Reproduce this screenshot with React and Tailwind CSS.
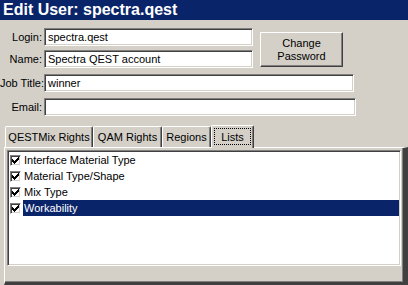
import React from "react";

const sunken =
  "border border-t-[#808080] border-l-[#808080] border-r-white border-b-white shadow-[inset_1px_1px_0_#404040,inset_-1px_-1px_0_#d4d0c8]";

function Field({ label, width, value }) {
  return (
    <div className="flex items-center h-[18px]">
      <div className="w-[42px] text-right whitespace-nowrap">{label}</div>
      <div className={`ml-[2px] h-[18px] bg-white flex items-center pl-[3px] ${sunken}`} style={{ width }}>
        <span className="leading-[14px]">{value}</span>
      </div>
    </div>
  );
}

function Check() {
  const cols = [2, 3, 4, 3, 2, 1, 0];
  return (
    <div className="w-[11px] h-[11px] bg-white border border-t-[#808080] border-l-[#808080] border-r-white border-b-white shadow-[inset_1px_1px_0_#404040,inset_-1px_-1px_0_#d4d0c8] relative shrink-0">
      <svg width="7" height="7" viewBox="0 0 7 7" className="absolute left-[1px] top-[1px]" shapeRendering="crispEdges">
        {cols.map((y, x) => (
          <rect key={x} x={x} y={y} width="1" height="3" fill="#000" />
        ))}
      </svg>
    </div>
  );
}

function Tab({ label, width, selected }) {
  if (selected) {
    return (
      <div
        className="relative z-10 h-[23px] -mb-[1px] bg-[#d4d0c8] border-l border-t border-l-white border-t-white border-r border-r-[#404040] shadow-[inset_-1px_0_0_#808080] flex items-start justify-center pt-[2px] rounded-tl-[2px] rounded-tr-[2px]"
        style={{ width }}
      >
        <span className="w-[37px] h-[17px] border border-dotted border-black flex items-center justify-center leading-[14px]">
          {label}
        </span>
      </div>
    );
  }
  return (
    <div
      className="h-[21px] bg-[#d4d0c8] border-l border-t border-l-white border-t-white border-r border-r-[#404040] shadow-[inset_-1px_0_0_#808080] flex items-center justify-center rounded-tl-[2px] rounded-tr-[2px]"
      style={{ width }}
    >
      <span className="leading-[14px]">{label}</span>
    </div>
  );
}

export default function App() {
  const items = [
    "Interface Material Type",
    "Material Type/Shape",
    "Mix Type",
    "Workability",
  ];
  return (
    <div className="w-[408px] h-[285px] bg-[#d4d0c8] flex flex-col font-['Liberation_Sans',Arial,sans-serif] text-[11px] text-black overflow-hidden">
      <div className="h-[20px] shrink-0 bg-[#0a246a] text-white font-bold text-[16px] leading-[20px] pl-[3px] whitespace-nowrap">
        Edit User: spectra.qest
      </div>

      <div className="flex mt-[8px]">
        <div className="flex flex-col gap-[4px]">
          <Field label="Login:" width={209} value="spectra.qest" />
          <Field label="Name:" width={209} value="Spectra QEST account" />
        </div>
        <div className="ml-[7px] mt-[4px] w-[83px] h-[35px] border border-t-white border-l-white border-r-[#404040] border-b-[#404040] shadow-[inset_-1px_-1px_0_#808080] flex flex-col items-center justify-center leading-[13px]">
          <span>Change</span>
          <span>Password</span>
        </div>
      </div>

      <div className="flex flex-col gap-[6px] mt-[6px]">
        <Field label="Job Title:" width={310} value="winner" />
        <Field label="Email:" width={312} value="" />
      </div>

      <div className="flex items-end h-[22px] mt-[9px] pl-[5px]">
        <Tab label="QESTMix Rights" width={88} />
        <Tab label="QAM Rights" width={69} />
        <Tab label="Regions" width={49} />
        <Tab label="Lists" width={43} selected />
      </div>

      <div className="ml-[4px] w-[404px] flex-1 border-l border-t border-l-white border-t-white border-r-[5px] border-b-[3px] border-r-[#404040] border-b-[#404040] shadow-[inset_-1px_-1px_0_#808080] p-[2px] pb-[16px]">
        <div className={`h-[116px] bg-white pt-[1px] ${sunken}`}>
          {items.map((it, i) => (
            <div key={it} className="flex items-center h-[16px] pl-[2px]">
              <Check />
              <div
                className={`ml-[2px] flex-1 h-[16px] leading-[16px] pl-[1px] mr-[1px] whitespace-nowrap ${
                  i === 3 ? "bg-[#0a246a] text-white" : ""
                }`}
              >
                {it}
              </div>
            </div>
          ))}
        </div>
      </div>
    </div>
  );
}
